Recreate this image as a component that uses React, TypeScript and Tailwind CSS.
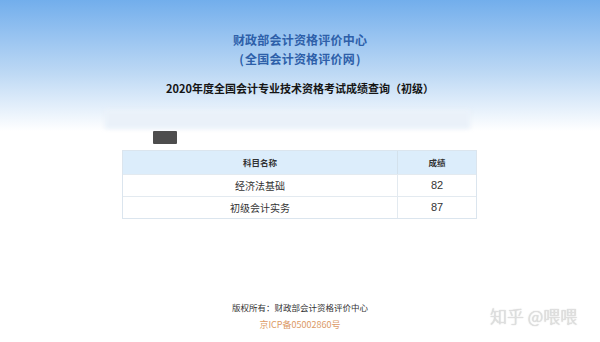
export default function App() {
  const font = { fontFamily: '"Noto Sans CJK SC", "Noto Sans", sans-serif' };
  return (
    <div
      className="relative w-[600px] h-[342px] overflow-hidden bg-white flex flex-col"
      style={font}
    >
      <div className="bg-gradient-to-b from-[#72aeec] via-[#bcd8f4] via-55% to-white pt-[30px] h-[131px] flex flex-col items-center">
        <div className="text-[12px] leading-[19px] font-bold text-[#2d5fa9] tracking-[0.2px]">
          财政部会计资格评价中心
        </div>
        <div className="text-[12px] leading-[19px] font-bold text-[#2d5fa9] tracking-[0.2px]">
          <span className="mr-[1px]">(</span>全国会计资格评价网<span className="ml-[1px]">)</span>
        </div>
        <div className="mt-[12px] text-[11px] leading-[16px] font-bold text-[#151515]">
          2020年度全国会计专业技术资格考试成绩查询（初级）
        </div>
        <div className="self-start ml-[105px] mt-[14px] w-[365px] h-[19px] bg-[#eaf1f9] blur-[2px]" />
      </div>
      <div className="ml-[153px] mt-[0px] w-[24px] h-[13px] bg-[#4d4d4d] rounded-[1px] blur-[0.4px]" />
      <div className="ml-[122px] mt-[6px] w-[355px] border border-[#dbe5ee]">
        <div className="flex h-[23px] bg-[#dcedfb] text-[8.5px] font-bold text-[#333]">
          <div className="w-[275px] flex items-center justify-center border-r border-[#d3e1ec]">科目名称</div>
          <div className="flex-1 flex items-center justify-center">成绩</div>
        </div>
        <div className="flex h-[22px] text-[10px] text-[#333] border-t border-[#e3eaf0]">
          <div className="w-[275px] flex items-center justify-center border-r border-[#e3eaf0]">经济法基础</div>
          <div className="flex-1 flex items-center justify-center text-[11px]" style={{ fontFamily: '"Liberation Sans", sans-serif' }}>82</div>
        </div>
        <div className="flex h-[22px] text-[10px] text-[#333] border-t border-[#e3eaf0]">
          <div className="w-[275px] flex items-center justify-center border-r border-[#e3eaf0]">初级会计实务</div>
          <div className="flex-1 flex items-center justify-center text-[11px]" style={{ fontFamily: '"Liberation Sans", sans-serif' }}>87</div>
        </div>
      </div>
      <div className="mt-[81px] flex flex-col items-center">
        <div className="text-[8.5px] leading-[14px] text-[#333]">版权所有：财政部会计资格评价中心</div>
        <div className="mt-[4px] text-[9px] leading-[14px] text-[#dc9a66]">京ICP备05002860号</div>
      </div>
      <div
        className="absolute left-[490px] top-[305px] text-[17px] leading-[22px] font-light text-[#e2e2e2] whitespace-nowrap"
        style={{ textShadow: '0 0 1px rgba(120,120,120,0.6)' }}
      >
        知乎 @喂喂
      </div>
    </div>
  );
}
